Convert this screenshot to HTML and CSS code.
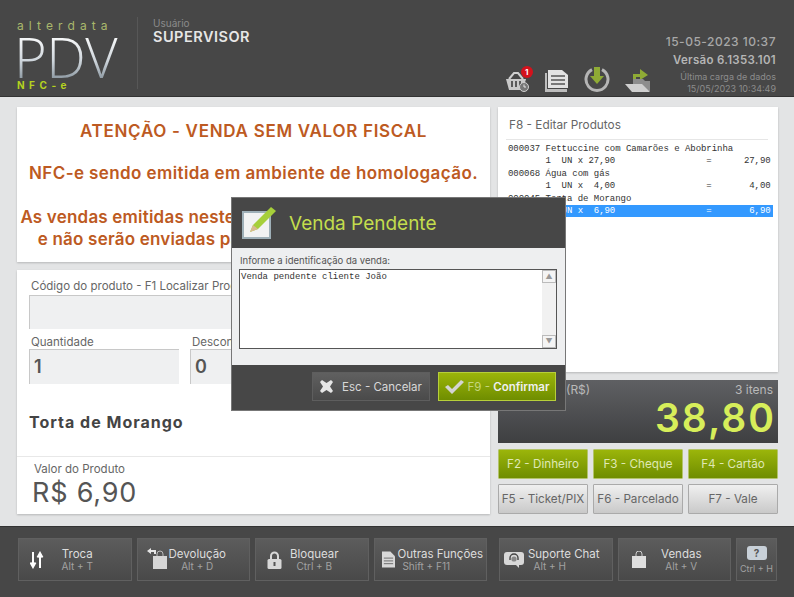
FILE: index.html
```html
<!DOCTYPE html>
<html lang="pt-BR">
<head>
    <meta charset="UTF-8">
    <title>Alterdata PDV NFC-e</title>
    <link rel="stylesheet" href="styles.css">
</head>
<body>
    <div class="app">
        <header class="header">
            <div class="logo">
                <div class="logo-top">alterdata</div>
                <div class="logo-pdv">PDV</div>
                <div class="logo-nfce">NFC-e</div>
            </div>
            <div class="user">
                <div class="user-label">Usuário</div>
                <div class="user-name">SUPERVISOR</div>
            </div>
            <div class="status">
                <div class="status-icons">
                    <div class="basket">
                        <svg width="24" height="22" viewBox="0 0 24 22">
                            <path d="M3 9 L8 3 H12 L17 9" fill="none" stroke="#cfcfcf" stroke-width="2"/>
                            <path d="M0 9 H20 L17 20 H3 Z" fill="#c9c9c9"/>
                            <path d="M6 11 V17 M10 11 V17 M14 11 V17" stroke="#5a5a5a" stroke-width="2"/>
                            <circle cx="18" cy="17" r="4.5" fill="#777" stroke="#cfcfcf"/>
                            <path d="M18 14.5 V17 H20" fill="none" stroke="#e5e5e5"/>
                        </svg>
                        <span class="badge">1</span>
                    </div>
                    <svg class="icon-docs" width="24" height="22" viewBox="0 0 24 22">
                        <path d="M0 3 H2 V19 H22 V22 H0 Z" fill="#bdbdbd"/>
                        <path d="M3 0 H17 L23 5 V18 H3 Z" fill="#e2e2e2"/>
                        <path d="M6 6 H20 M6 10 H20 M6 14 H20" stroke="#555" stroke-width="1.6"/>
                    </svg>
                    <svg class="icon-down" width="26" height="26" viewBox="0 0 26 26">
                        <path d="M8 3.6 A11 11 0 1 0 18 3.6" fill="none" stroke="#b5b5b5" stroke-width="3"/>
                        <path d="M10 1 H16 V10 H20 L13 18 L6 10 H10 Z" fill="#8fab35"/>
                    </svg>
                    <svg class="icon-folder" width="26" height="25" viewBox="0 0 26 25">
                        <path d="M8 13 V7 H15 V2 L23 8 L15 13 V10 H11 V13 Z" fill="#8fab35"/>
                        <path d="M8 12 H18 L20 14 H25 V24 H8 Z" fill="#8d8d8d"/>
                        <path d="M0 17 H17 L25 25 H7 Z" fill="#cfcfcf"/>
                    </svg>
                </div>
                <div class="status-text">
                    <div class="status-date">15-05-2023 10:37</div>
                    <div class="status-version">Versão 6.1353.101</div>
                    <div class="status-load">Última carga de dados<br>15/05/2023 10:34:49</div>
                </div>
            </div>
        </header>

        <main class="main">
            <div class="col-left">
                <section class="panel warning">
                    <h2>ATENÇÃO - VENDA SEM VALOR FISCAL</h2>
                    <p>NFC-e sendo emitida em ambiente de homologação.</p>
                    <p class="warning-last">As vendas emitidas neste ambiente não têm valor fiscal<br>e não serão enviadas para a Secretaria da Fazenda.</p>
                </section>
                <section class="panel product">
                    <label class="field-label">Código do produto - F1 Localizar Produto</label>
                    <div class="input input-code"></div>
                    <div class="field-row">
                        <div class="field">
                            <label class="field-label">Quantidade</label>
                            <div class="input">1</div>
                        </div>
                        <div class="field">
                            <label class="field-label">Desconto</label>
                            <div class="input">0</div>
                        </div>
                    </div>
                    <div class="product-name">Torta de Morango</div>
                    <div class="product-value">
                        <div class="value-label">Valor do Produto</div>
                        <div class="value-price">R$ 6,90</div>
                    </div>
                </section>
            </div>

            <div class="col-right">
                <section class="panel receipt">
                    <div class="receipt-title">F8 - Editar Produtos</div>
<pre class="receipt-lines">000037 Fettuccine com Camarões e Abobrinha
       1  UN x 27,90                 =      27,90
000068 Água com gás
       1  UN x  4,00                 =       4,00
000045 Torta de Morango
<span class="selected">       1  UN x  6,90                 =       6,90</span></pre>
                </section>
                <section class="total">
                    <div class="total-top"><span>Total (R$)</span><span>3 itens</span></div>
                    <div class="total-value">38,80</div>
                </section>
                <div class="pay-grid">
                    <button class="pay green">F2 - Dinheiro</button>
                    <button class="pay green">F3 - Cheque</button>
                    <button class="pay green">F4 - Cartão</button>
                    <button class="pay">F5 - Ticket/PIX</button>
                    <button class="pay">F6 - Parcelado</button>
                    <button class="pay">F7 - Vale</button>
                </div>
            </div>
        </main>

        <footer class="footer">
            <button class="tool">
                <svg width="16" height="18" viewBox="0 0 16 18"><path d="M3 1 V15 M0.500 11.500 L3 16 L5.500 11.500 M10 17 V3 M7.500 6.500 L10 2 L12.500 6.500" fill="none" stroke="#fff" stroke-width="2"/></svg>
                <span class="tool-text"><b>Troca</b><i>Alt + T</i></span>
            </button>
            <button class="tool">
                <svg class="icon-return" width="22" height="22" viewBox="0 0 22 22"><path d="M7 20 V8 H21 V21 H7 Z" fill="#d6d6d6"/><path d="M11 8 V6 A3 3 0 0 1 17 6 V8" fill="none" stroke="#bbb"/><path d="M1 3 L5 0 V2 H10 V6 H8 V4 H5 V6 Z" fill="#e5e5e5"/></svg>
                <span class="tool-text"><b>Devolução</b><i>Alt + D</i></span>
            </button>
            <button class="tool">
                <svg width="16" height="18" viewBox="0 0 16 18"><path d="M4 8 V5 A3.500 3.500 0 0 1 11 5 V8" fill="none" stroke="#d8d8d8" stroke-width="2"/><rect x="0.500" y="8" width="14" height="10" rx="1.500" fill="#d8d8d8"/><rect x="6.500" y="11" width="2" height="4" fill="#555"/></svg>
                <span class="tool-text"><b>Bloquear</b><i>Ctrl + B</i></span>
            </button>
            <button class="tool tool-wide">
                <svg width="13" height="17" viewBox="0 0 14 17"><path d="M0 0 H9 L14 5 V17 H0 Z" fill="#d8d8d8"/><path d="M2 7 H12 M2 10 H12 M2 13 H12" stroke="#666"/></svg>
                <span class="tool-text"><b>Outras Funções</b><i class="key-left">Shift + F11</i></span>
            </button>
            <button class="tool tool-chat">
                <svg width="20" height="16" viewBox="0 0 20 16"><rect x="0" y="0" width="20" height="13" rx="3" fill="#d8d8d8"/><path d="M12 13 L15 16 V13 Z" fill="#d8d8d8"/><path d="M6 8 V6 A4 4 0 0 1 14 6 V8" fill="none" stroke="#444" stroke-width="1.400"/><circle cx="10" cy="7" r="2.600" fill="#888"/></svg>
                <span class="tool-text"><b>Suporte Chat</b><i class="key-left">Alt + H</i></span>
            </button>
            <button class="tool tool-sales">
                <svg width="14" height="17" viewBox="0 0 14 17"><path d="M0 5 H14 V17 H0 Z" fill="#dedede"/><path d="M4 5 V3 A3 3 0 0 1 10 3 V5" fill="none" stroke="#cfcfcf"/></svg>
                <span class="tool-text"><b>Vendas</b><i>Alt + V</i></span>
            </button>
            <button class="tool tool-help">
                <span class="help-bubble">?</span>
                <i>Ctrl + H</i>
            </button>
        </footer>

        <div class="modal">
            <div class="modal-head">
                <svg width="36" height="34" viewBox="0 0 36 34">
                    <rect x="1" y="6" width="27" height="26" fill="#f2f2f2" stroke="#9fb0b8" stroke-width="2"/>
                    <path d="M8 26 L11 19 L29 1 L34 5 L16 23 Z" fill="#a6cf3a"/>
                    <path d="M8 26 L11 19 L16 23 Z" fill="#d9b98f"/>
                </svg>
                <h3>Venda Pendente</h3>
            </div>
            <div class="modal-body">
                <label>Informe a identificação da venda:</label>
                <div class="textarea">
                    <div class="textarea-text">Venda pendente cliente João</div>
                    <div class="scrollbar">
                        <span class="scroll-btn">▲</span>
                        <span class="scroll-btn">▼</span>
                    </div>
                </div>
            </div>
            <div class="modal-foot">
                <button class="modal-btn">
                    <svg width="13" height="13" viewBox="0 0 13 13"><path d="M2 5 L0 2 L2 0 L6.500 3 L11 0 L13 2 L10 6.500 L13 11 L11 13 L6.500 10 L2 13 L0 11 L3 6.500 Z" fill="#e6e6e6"/></svg>
                    <span>Esc - Cancelar</span>
                </button>
                <button class="modal-btn confirm">
                    <svg width="19" height="14" viewBox="0 0 19 14"><path d="M0 7 L3 5 L7 9 L16 0 L19 2 L7 14 Z" fill="#d4d4d4"/></svg>
                    <span>F9 - <b>Confirmar</b></span>
                </button>
            </div>
        </div>
    </div>
</body>
</html>
```
FILE: styles.css
```css
* {
    margin: 0;
    padding: 0;
    box-sizing: border-box;
}

body {
    font-family: Inter, 'Noto Sans', sans-serif;
    background: #e3e4e5;
    overflow: hidden;
}

.app {
    position: relative;
    width: 794px;
    height: 597px;
    display: flex;
    flex-direction: column;
}

/* header */
.header {
    height: 97px;
    background: #474747;
    border-bottom: 1px solid #333;
    display: flex;
    padding: 17px 18px 0 17px;
}

.logo {
    width: 121px;
    height: 72px;
    border-right: 1px solid #575757;
}

.logo-top {
    color: #a9b86c;
    font-size: 12px;
    line-height: 14px;
    letter-spacing: 5.100px;
    margin-top: 2px;
}

.logo-pdv {
    font-family: 'Open Sans', sans-serif;
    font-weight: 300;
    font-size: 56px;
    line-height: 46px;
    letter-spacing: -0.500px;
    margin-left: -3px;
    background: linear-gradient(180deg, #fff 0%, #cfd6dc 60%, #8d99a2 100%);
    -webkit-background-clip: text;
    background-clip: text;
    color: transparent;
}

.logo-nfce {
    color: #b5d21f;
    font-size: 10px;
    line-height: 12px;
    font-weight: 700;
    letter-spacing: 4.500px;
}

.user {
    padding-left: 15px;
}

.user-label {
    color: #8b8b8b;
    font-size: 10px;
    line-height: 12px;
}

.user-name {
    color: #e6e6e6;
    font-size: 14.500px;
    font-weight: 600;
    line-height: 16px;
    letter-spacing: 0.500px;
}

.status {
    margin-left: auto;
    display: flex;
    align-items: flex-end;
    gap: 15px;
    height: 78px;
}

.status-icons {
    display: flex;
    align-items: flex-end;
    gap: 15px;
    padding-bottom: 3px;
}

.basket {
    position: relative;
    width: 24px;
    height: 22px;
}

.badge {
    position: absolute;
    top: -4px;
    right: -3px;
    width: 12px;
    height: 12px;
    border-radius: 50%;
    background: #d4121c;
    color: #fff;
    font-size: 8px;
    font-weight: 700;
    line-height: 12px;
    text-align: center;
}

.status-text {
    text-align: right;
}

.status-date {
    color: #a8a8a8;
    font-size: 12px;
    font-weight: 500;
    line-height: 18px;
    letter-spacing: 0.500px;
}

.status-version {
    color: #b5b5b5;
    font-size: 11.500px;
    font-weight: 600;
    line-height: 18px;
    letter-spacing: 0.300px;
}

.status-load {
    color: #8c8c8c;
    font-size: 9px;
    line-height: 12px;
    margin-top: 2px;
}

/* main area */
.main {
    flex: 1;
    display: flex;
    gap: 8px;
    padding: 10px 16px 12px 17px;
}

.col-left {
    width: 473px;
    display: flex;
    flex-direction: column;
    gap: 8px;
}

.col-right {
    width: 280px;
    display: flex;
    flex-direction: column;
}

.panel {
    background: #fff;
    box-shadow: 0 1px 2px rgba(0,0,0,0.2);
}

.warning {
    height: 155px;
    text-align: center;
    color: #bd5a22;
    font-size: 17px;
    font-weight: 600;
    padding-top: 15px;
    overflow: hidden;
}

.warning h2 {
    font-size: 17px;
    font-weight: 600;
    line-height: 18px;
    letter-spacing: 0.700px;
    margin-bottom: 24px;
}

.warning p {
    line-height: 18px;
    letter-spacing: 0.400px;
    margin-bottom: 24px;
}

.warning .warning-last {
    line-height: 22px;
    letter-spacing: 0.200px;
    white-space: nowrap;
}

.product {
    flex: 1;
    padding: 9px 12px 0;
    display: flex;
    flex-direction: column;
}

.field-label {
    display: block;
    color: #666;
    font-size: 11.500px;
    line-height: 14px;
    padding-left: 2px;
    white-space: nowrap;
}

.input {
    height: 35px;
    background: #eff0f1;
    border-top: 1px solid #c8c8c8;
    border-left: 1px solid #c8c8c8;
    color: #555;
    font-size: 18px;
    font-weight: 600;
    line-height: 34px;
    padding-left: 4px;
}

.input-code {
    height: 34px;
    margin-top: 2px;
}

.field-row {
    display: flex;
    gap: 11px;
    margin-top: 6px;
}

.field {
    width: 150px;
}

.product-name {
    color: #444;
    font-size: 16px;
    font-weight: 700;
    letter-spacing: 1px;
    line-height: 20px;
    margin-top: 28px;
}

.product-value {
    margin: 24px -12px 0 -12px;
    border-top: 1px solid #e8e8e8;
    padding: 5px 0 0 17px;
}

.value-label {
    color: #666;
    font-size: 11.500px;
    line-height: 14px;
}

.value-price {
    color: #555;
    font-size: 27px;
    line-height: 34px;
    letter-spacing: 0.800px;
    margin-left: -2px;
}

/* right column */
.receipt {
    height: 265px;
    padding: 0 5px 0 8px;
}

.receipt-title {
    color: #666;
    font-size: 11.800px;
    line-height: 18px;
    padding: 9px 0 6px 3px;
    border-bottom: 1px solid #e6e6e6;
    margin-right: 5px;
    height: 33px;
}

.receipt-lines {
    font-family: 'Liberation Mono', monospace;
    font-size: 9px;
    line-height: 12.400px;
    letter-spacing: -0.040px;
    color: #333;
    margin-top: 3px;
    padding-left: 2px;
}

.selected {
    display: block;
    background: #3399ff;
    color: #fff;
}

.total {
    height: 63px;
    margin-top: 8px;
    background: linear-gradient(180deg, #5f6063 0%, #3e3f41 100%);
    padding: 3px 5px 0 0;
}

.total-top {
    display: flex;
    justify-content: space-between;
    color: #b9b9b9;
    font-size: 12px;
    line-height: 14px;
    padding-left: 37px;
}

.total-value {
    color: #d7ee5a;
    font-size: 39px;
    font-weight: 600;
    line-height: 42px;
    letter-spacing: 2px;
    text-align: right;
    margin-right: -3px;
}

.pay-grid {
    display: grid;
    grid-template-columns: repeat(3, 90px);
    grid-auto-rows: 30px;
    gap: 5px;
    margin-top: 6px;
}

.pay {
    font-family: inherit;
    font-size: 11.700px;
    color: #666;
    background: linear-gradient(180deg, #f0f0f0 0%, #c9c9c9 100%);
    border: 1px solid #aaa;
    border-radius: 1px;
    white-space: nowrap;
    padding: 0;
}

.pay.green {
    color: #dfe8b5;
    background: linear-gradient(180deg, #9bb50a 0%, #6f8d00 100%);
    border: 1px solid #b3c36b;
}

/* footer */
.footer {
    height: 71px;
    background: #474747;
    border-top: 1px solid #333;
    display: flex;
    align-items: flex-start;
    padding: 11px 0 0 18px;
    gap: 5px;
}

.tool {
    width: 113.500px;
    height: 43px;
    font-family: inherit;
    background: linear-gradient(180deg, #5c5c5c 0%, #494949 100%);
    border: 1px solid #606060;
    display: flex;
    align-items: center;
    padding: 0 22px 0 11px;
    color: #ddd;
}

.tool-wide {
    padding-right: 0;
    padding-left: 7px;
    margin-right: 7px;
}

.tool-chat {
    padding-right: 8px;
    padding-left: 4px;
}

.tool-sales {
    padding-right: 13px;
    padding-left: 13px;
}

.icon-return {
    margin-left: -3px;
    margin-top: -2px;
}

.tool-text {
    flex: 1;
    display: flex;
    flex-direction: column;
    align-items: center;
    white-space: nowrap;
}

.tool b {
    font-weight: 400;
    font-size: 11.500px;
    line-height: 13px;
}

.tool i {
    font-style: normal;
    font-size: 10px;
    line-height: 11px;
    color: #a2a2a2;
}

.tool i.key-left {
    margin-right: 28px;
}

.tool-help {
    width: 41px;
    flex-direction: column;
    justify-content: center;
    padding: 0;
    white-space: nowrap;
}

.tool-help i {
    font-size: 9px;
}

.help-bubble {
    width: 20px;
    height: 14px;
    background: #c8d0d8;
    border-radius: 3px;
    color: #555;
    font-size: 10px;
    font-weight: 700;
    line-height: 14px;
    margin-bottom: 3px;
}

/* modal */
.modal {
    position: absolute;
    left: 232px;
    top: 198px;
    width: 333px;
    height: 212px;
    background: #474747;
    box-shadow: 0 0 0 1px #777;
    display: flex;
    flex-direction: column;
}

.modal-head {
    height: 50px;
    display: flex;
    align-items: center;
    padding: 0 0 0 10px;
    gap: 11px;
}

.modal-head h3 {
    color: #c3dd4d;
    font-size: 19px;
    font-weight: 400;
    margin-top: 1px;
}

.modal-body {
    height: 117px;
    background: #eeeff0;
    padding: 7px 8px 0 7px;
}

.modal-body label {
    display: block;
    color: #555;
    font-size: 9.500px;
    line-height: 12px;
    padding-left: 1px;
}

.textarea {
    height: 80px;
    margin-top: 2px;
    border: 1px solid #555;
    background: #fff;
    display: flex;
}

.textarea-text {
    flex: 1;
    font-family: 'Liberation Mono', monospace;
    font-size: 9px;
    line-height: 12px;
    padding: 1px;
    color: #333;
}

.scrollbar {
    width: 14px;
    background: #f1f1f1;
    display: flex;
    flex-direction: column;
    justify-content: space-between;
}

.scroll-btn {
    height: 13px;
    background: #f4f4f4;
    border: 1px solid #bbb;
    color: #999;
    font-size: 7px;
    line-height: 11px;
    text-align: center;
}

.modal-foot {
    flex: 1;
    display: flex;
    justify-content: flex-end;
    gap: 8px;
    padding: 7px 9px 0 0;
}

.modal-btn {
    width: 118px;
    height: 29px;
    font-family: inherit;
    font-size: 11.500px;
    color: #d8d8d8;
    background: linear-gradient(180deg, #606060 0%, #4a4a4a 100%);
    border: 1px solid #5e5e5e;
    display: flex;
    align-items: center;
    justify-content: center;
    gap: 9px;
    white-space: nowrap;
}

.modal-btn.confirm {
    background: linear-gradient(180deg, #9bb50a 0%, #6f8d00 100%);
    border: 1px solid #b7cf3a;
    color: #c5d67d;
    gap: 4px;
}

.modal-btn b {
    color: #f0f0f0;
    font-weight: 600;
}
```
